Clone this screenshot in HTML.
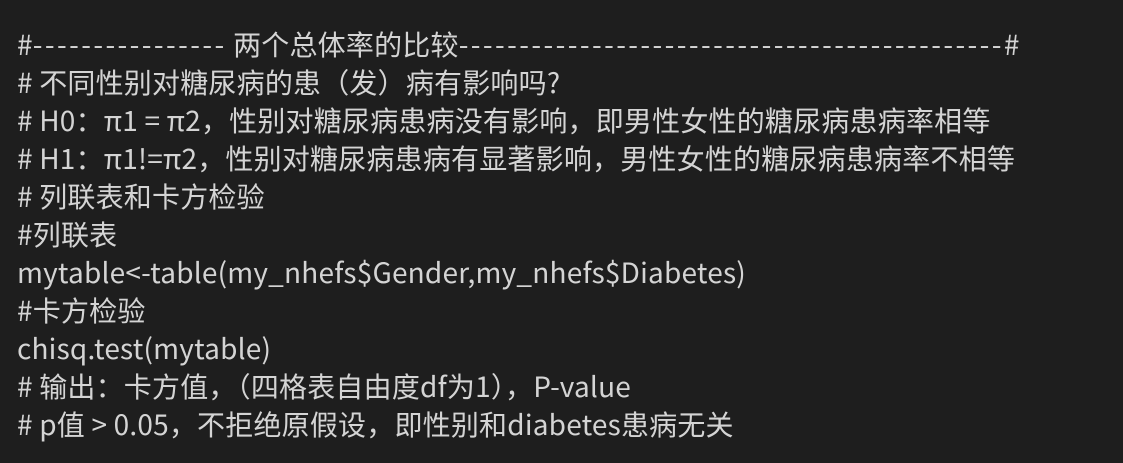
<!DOCTYPE html>
<html><head><meta charset="utf-8"><style>
html,body{margin:0;padding:0;background:#1e1e1e;width:1123px;height:463px;overflow:hidden}
.l{position:absolute;left:17px;white-space:pre;color:#d4d4d4;font:28px "Noto Sans CJK SC",sans-serif;line-height:38px;letter-spacing:0.2px;font-feature-settings:"palt" 0,"halt" 0}
.d{letter-spacing:2.4px}
</style></head><body>
<div class="l" style="top:25px">#<span class="d">----------------</span> 两个总体率的比较<span class="d">---------------------------------------------</span>#</div>
<div class="l" style="top:63px"># 不同性别对糖尿病的患（发）病有影响吗?</div>
<div class="l" style="top:101px"># H0：π1 = π2，性别对糖尿病患病没有影响，即男性女性的糖尿病患病率相等</div>
<div class="l" style="top:139px"># H1：π1!=π2，性别对糖尿病患病有显著影响，男性女性的糖尿病患病率不相等</div>
<div class="l" style="top:177px"># 列联表和卡方检验</div>
<div class="l" style="top:215px">#列联表</div>
<div class="l" style="top:253px">mytable&lt;-table(my_nhefs$Gender,my_nhefs$Diabetes)</div>
<div class="l" style="top:291px">#卡方检验</div>
<div class="l" style="top:329px">chisq.test(mytable)</div>
<div class="l" style="top:367px"># 输出：卡方值，（四格表自由度df为1），P-value</div>
<div class="l" style="top:405px"># p值 &gt; 0.05，不拒绝原假设，即性别和diabetes患病无关</div>
</body></html>
